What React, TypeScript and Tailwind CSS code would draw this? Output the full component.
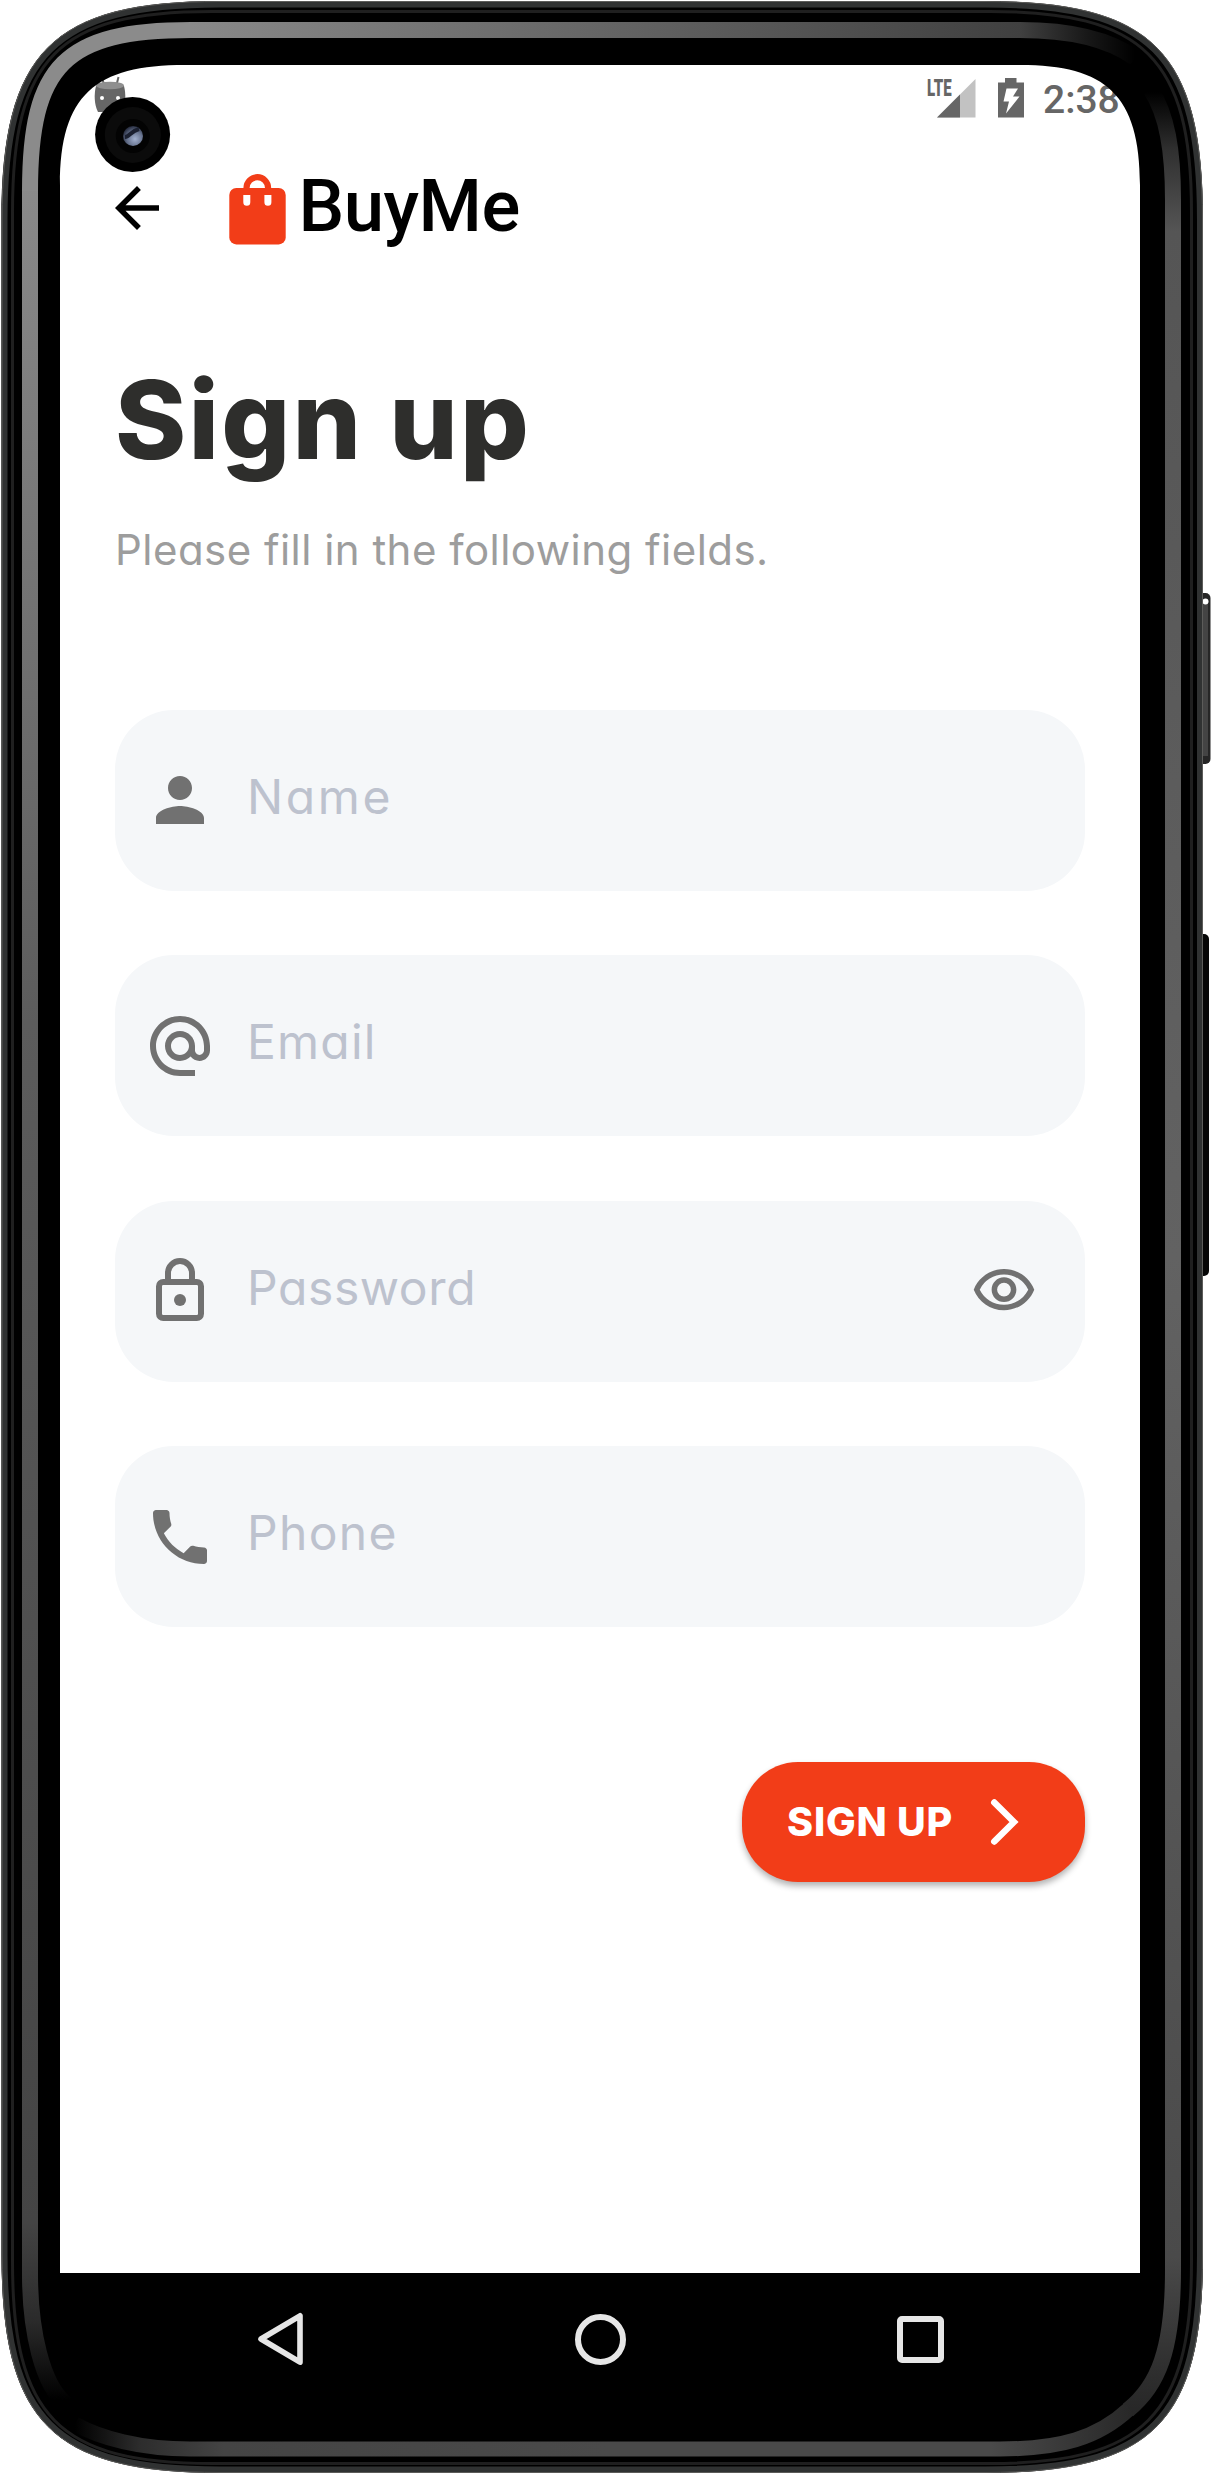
import type { ReactNode } from "react";
import {
  MdAlternateEmail,
  MdArrowBack,
  MdOutlineVisibility,
  MdPerson,
  MdPhone,
} from "react-icons/md";

const OUTER =
  "M1.5 220 C1.5 52 52 1 220 1 H985 C1153 1 1203 52 1203 220 V2254 C1203 2422 1153 2473 985 2473 H220 C52 2473 1.5 2422 1.5 2254 Z";
const INNER =
  "M60 185 C60 95 95 65 185 65 H1020 C1106 65 1140 95 1140 185 V2273 H60 Z";

function PhoneFrame() {
  return (
    <svg
      className="pointer-events-none absolute inset-0"
      width="1211"
      height="2474"
      viewBox="0 0 1211 2474"
      fill="none"
      aria-hidden="true"
    >
      <defs>
        <linearGradient id="leftBand" gradientUnits="userSpaceOnUse" x1="0" y1="180" x2="0" y2="2400">
          <stop offset="0" stopColor="#8a8a8a" />
          <stop offset="0.38" stopColor="#5c5c5c" />
          <stop offset="0.92" stopColor="#444" />
          <stop offset="0.965" stopColor="#2a2a2a" />
          <stop offset="1" stopColor="#000" />
        </linearGradient>
        <linearGradient id="topBand" gradientUnits="userSpaceOnUse" x1="180" y1="0" x2="1135" y2="0">
          <stop offset="0" stopColor="#8a8a8a" />
          <stop offset="0.5" stopColor="#606060" />
          <stop offset="0.88" stopColor="#404040" />
          <stop offset="0.95" stopColor="#181818" />
          <stop offset="1" stopColor="#000" />
        </linearGradient>
        <linearGradient id="rightBand" gradientUnits="userSpaceOnUse" x1="0" y1="92" x2="0" y2="2420">
          <stop offset="0" stopColor="#000" />
          <stop offset="0.025" stopColor="#303030" />
          <stop offset="0.06" stopColor="#555" />
          <stop offset="0.5" stopColor="#626262" />
          <stop offset="0.93" stopColor="#4a4a4a" />
          <stop offset="0.98" stopColor="#2e2e2e" />
          <stop offset="1" stopColor="#262626" />
        </linearGradient>
        <linearGradient id="bottomBand" gradientUnits="userSpaceOnUse" x1="75" y1="0" x2="1140" y2="0">
          <stop offset="0" stopColor="#000" />
          <stop offset="0.06" stopColor="#2c2c2c" />
          <stop offset="0.14" stopColor="#444" />
          <stop offset="0.5" stopColor="#4a4a4a" />
          <stop offset="0.86" stopColor="#4a4a4a" />
          <stop offset="1" stopColor="#262626" />
        </linearGradient>
        <radialGradient id="lens" cx="0.6" cy="0.65" r="0.7">
          <stop offset="0" stopColor="#a3b1cf" />
          <stop offset="0.55" stopColor="#66728d" />
          <stop offset="1" stopColor="#1d2233" />
        </radialGradient>
      </defs>

      <rect x="1197" y="593" width="13.5" height="171" rx="5" fill="#262626" />
      <rect x="1203" y="602" width="5" height="154" fill="#444" />
      <circle cx="1205.5" cy="601.5" r="3" fill="#fff" />
      <rect x="1197" y="934" width="12" height="342" rx="5" fill="#060606" />

      <path d={OUTER + INNER} fill="#000" fillRule="evenodd" />

      <path
        d="M4.5 220 C4.5 54 54 4.5 220 4.5 H985 C1151 4.5 1200 54 1200 220 V2254 C1200 2420 1151 2469.5 985 2469.5 H220 C54 2469.5 4.5 2420 4.5 2254 Z"
        stroke="#303232"
        strokeWidth="6"
      />
      <path
        d="M2 220 C2 52 52 1.5 220 1.5 H985 C1153 1.5 1202.5 52 1202.5 220 V2254 C1202.5 2422 1153 2472.5 985 2472.5 H220 C52 2472.5 2 2422 2 2254 Z"
        stroke="#5c5c5a"
        strokeWidth="1"
      />
      <path
        d="M12.5 212 C12.5 58 58 11.5 212 11.5 H990 C1143 11.5 1191.5 58 1191.5 212 V2262 C1191.5 2416 1143 2463.5 990 2463.5 H212 C58 2463.5 12.5 2416 12.5 2262 Z"
        stroke="#1f1f1f"
        strokeWidth="3"
      />

      <path d="M30 190 V2274 C30 2330 42 2385 66 2404" stroke="url(#leftBand)" strokeWidth="16" />
      <path d="M30 191 C30 65 65 30 191 30" stroke="#8b8b8b" strokeWidth="16" />
      <path d="M190 30 H1020 C1075 30 1110 40 1135 58" stroke="url(#topBand)" strokeWidth="16" />
      <path
        d="M1151 90 C1167 115 1173 150 1173 200 V2270 C1173 2350 1158 2386 1128 2410"
        stroke="url(#rightBand)"
        strokeWidth="16"
      />
      <path
        d="M1129 2409 C1098 2438 1060 2449 1000 2449 H190 C140 2449 100 2438 75 2424"
        stroke="url(#bottomBand)"
        strokeWidth="15"
      />

      <circle cx="132.6" cy="134.5" r="37.5" fill="#000" />
      <circle cx="132.8" cy="135" r="28" fill="#0b0b0b" />
      <circle cx="132.8" cy="136" r="17" fill="#030303" />
      <circle cx="133" cy="136" r="10" fill="url(#lens)" />
      <path d="M125 137 C129 137 131 131 139 129" stroke="#1b2030" strokeWidth="4" />
    </svg>
  );
}

function StatusBar() {
  return (
    <div className="flex h-[74px] items-start justify-between pl-[33px] pr-[20px] text-[#666]">
      <svg className="mt-[11px]" width="34" height="40" viewBox="0 0 34 40" fill="none">
        <path d="M9 1 L11 9 M25.5 1 L23.5 9" stroke="#666" strokeWidth="2" />
        <path d="M3 10 H31 C33 18 33 28 29 36 H5 C1 28 1 18 3 10 Z" fill="#666" />
        <ellipse cx="17" cy="9.5" rx="14" ry="3.8" fill="#8f8f8f" />
        <circle cx="9" cy="22" r="2" fill="#fff" />
        <circle cx="25" cy="22" r="2" fill="#fff" />
      </svg>
      <div className="flex items-start">
        <div className="mr-[22px] mt-[12px] flex">
          <span className="-mr-[14px] h-5 w-[24px] origin-top-left scale-x-[0.64] font-['Roboto'] text-[23.5px] leading-[23px] font-black">
            LTE
          </span>
          <svg width="39" height="42" viewBox="0 0 39 42">
            <path d="M0 40.5 L38.5 2 V40.5 Z" fill="#c2c2c2" />
            <path d="M0 40.5 L23 17.5 V40.5 Z" fill="#666" />
          </svg>
        </div>
        <svg className="mr-[19px] mt-[13px]" width="26" height="40" viewBox="0 0 26 40">
          <path d="M7 0 H18.5 V4.5 H26 V39.5 H0 V4.5 H7 Z" fill="#666" />
          <path d="M8.5 10.5 H20 L15 18.5 H21.5 L8 35.5 L11 23.5 H5.5 Z" fill="#fff" />
        </svg>
        <span className="mt-[9px] w-[77px] font-['Roboto'] text-[39px] leading-[52px] font-medium">
          2:38
        </span>
      </div>
    </div>
  );
}

function BagLogo() {
  return (
    <svg width="57" height="71" viewBox="0 0 57 71" fill="none">
      <path d="M17.5 20 V14 A10.8 10.8 0 0 1 39.1 14 V20" stroke="#f23d18" strokeWidth="6.2" />
      <rect x="0.3" y="14" width="56.4" height="56.4" rx="7" fill="#f23d18" />
      <path d="M14.3 21 h7 v7.2 a3.5 3.5 0 0 1 -7 0 Z M35.4 21 h7 v7.2 a3.5 3.5 0 0 1 -7 0 Z" fill="#fff" />
    </svg>
  );
}

function LockIcon() {
  return (
    <svg width="72" height="72" viewBox="0 0 24 24" fill="none" stroke="#717171" strokeWidth="2">
      <rect x="5" y="9" width="14" height="12" rx="1.4" />
      <path d="M8 9 V6 a4 4 0 0 1 8 0 V9" />
      <circle cx="12" cy="15" r="2" fill="#717171" stroke="none" />
    </svg>
  );
}

function Field({
  icon,
  label,
  spacing,
  trailing,
}: {
  icon: ReactNode;
  label: string;
  spacing: string;
  trailing?: ReactNode;
}) {
  return (
    <div className="flex h-[181px] items-center rounded-[59px] bg-[#f5f7f9] pl-[29px] pr-[48px] text-[#717171]">
      {icon}
      <span
        className={`ml-[31px] flex-1 pb-[7px] text-[48px] leading-[60px] font-normal text-[#bdc2ce] ${spacing}`}
      >
        {label}
      </span>
      {trailing}
    </div>
  );
}

function NavBar() {
  return (
    <div className="flex h-[132px] items-center justify-between pl-[196px] pr-[196px]">
      <svg width="48" height="56" viewBox="0 0 48 56" fill="none" stroke="#e6e6e6" strokeWidth="5.6" strokeLinejoin="round">
        <path d="M5 28 L44 4.8 V51.2 Z" />
      </svg>
      <span className="size-[51px] rounded-full border-[6px] border-[#e6e6e6]" />
      <span className="size-[47px] rounded-[5px] border-[6px] border-[#e6e6e6]" />
    </div>
  );
}

export default function App() {
  return (
    <div className="relative h-[2474px] w-[1211px] overflow-hidden bg-white font-['Inter',sans-serif] [font-feature-settings:'cv11']">
      <main className="ml-[60px] w-[1080px] pt-[65px]">
        <div className="flex h-[2208px] flex-col">
          <StatusBar />
          <header className="flex h-[140px] items-center pl-[44px]">
            <MdArrowBack className="-mt-[2px] text-black" size={66} />
            <div className="ml-[58.5px] flex">
              <BagLogo />
              <span className="ml-[13px] -mt-[5px] font-['Roboto'] text-[72.5px] leading-[76px] font-medium tracking-[-0.5px] text-black">
                BuyMe
              </span>
            </div>
          </header>
          <section className="flex flex-col px-[55px] pt-[81px]">
            <h1 className="text-[108px] leading-[120px] font-extrabold tracking-[2.2px] text-[#2e2e2c]">Sign up</h1>
            <p className="mt-10 text-[42px] leading-[60px] tracking-[0.47px] text-[#9d9d9d]">
              Please fill in the following fields.
            </p>
            <form className="mt-[129.5px] flex flex-col gap-[64.5px]">
              <Field icon={<MdPerson size={72} />} label="Name" spacing="tracking-[2.6px]" />
              <Field icon={<MdAlternateEmail size={72} />} label="Email" spacing="tracking-[1.2px]" />
              <Field
                icon={<LockIcon />}
                label="Password"
                spacing="tracking-[0.6px]"
                trailing={<MdOutlineVisibility size={66} />}
              />
              <Field icon={<MdPhone size={72} />} label="Phone" spacing="tracking-[1.3px]" />
            </form>
            <button
              type="button"
              className="mt-[134.5px] flex h-[120px] w-[343px] items-center self-end rounded-[56px] bg-[#f23d18] pl-[45px] text-[39.5px] font-extrabold tracking-[0.8px] text-white shadow-[0_4px_6px_rgba(0,0,0,0.3)]"
            >
              <span className="w-[170px] whitespace-nowrap pt-[2px] text-left">SIGN UP</span>
              <svg className="ml-[30.5px]" width="34" height="50" viewBox="0 0 34 50" fill="none" stroke="#fff" strokeWidth="6.5" strokeLinecap="round" strokeLinejoin="miter">
                <path d="M6.3 5.5 L26 25 L6.3 44.5" />
              </svg>
            </button>
          </section>
        </div>
      </main>
      <PhoneFrame />
      <nav className="relative ml-[60px] w-[1080px]">
        <NavBar />
      </nav>
    </div>
  );
}
